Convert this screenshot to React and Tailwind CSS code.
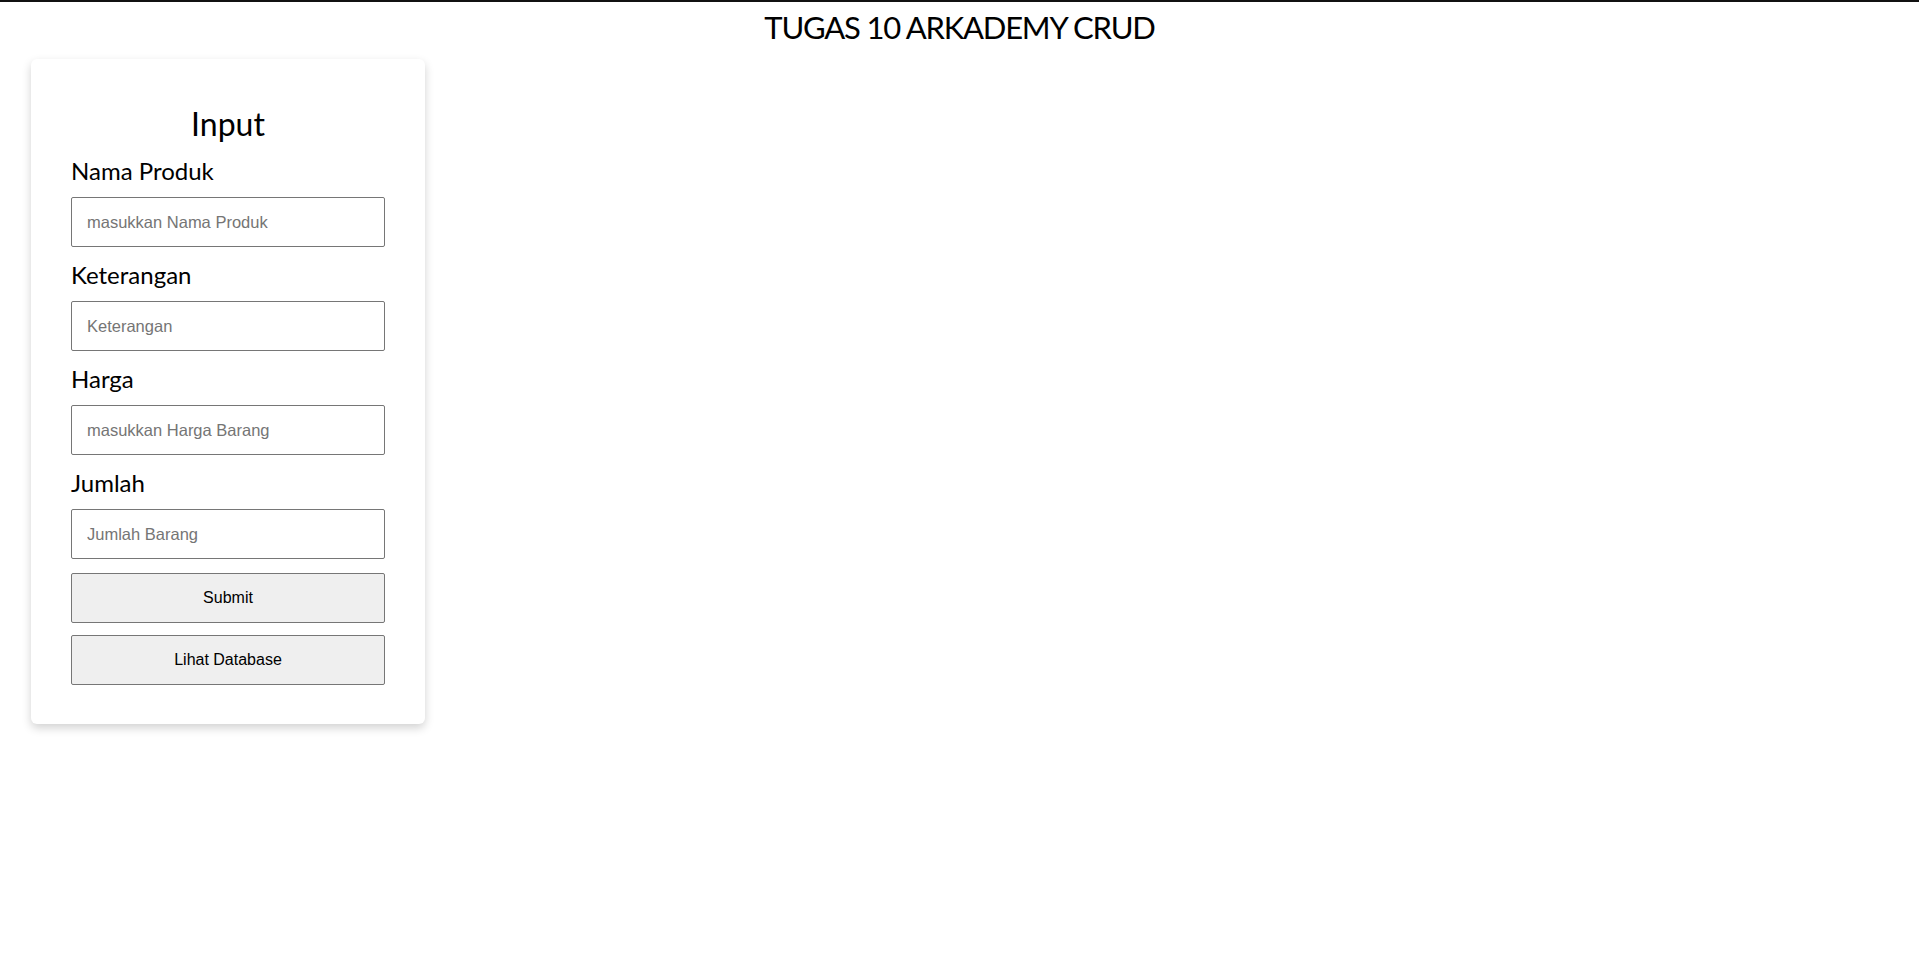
import React from 'react';

const fields = [
  { label: 'Nama Produk', placeholder: 'masukkan Nama Produk' },
  { label: 'Keterangan', placeholder: 'Keterangan' },
  { label: 'Harga', placeholder: 'masukkan Harga Barang' },
  { label: 'Jumlah', placeholder: 'Jumlah Barang' },
];

const App = () => {
  return (
    <div className="min-h-screen bg-white border-t-2 border-[#111] font-['Lato',sans-serif] text-black">
      <h1 className="pt-[5px] text-center text-[31px] leading-[40px] font-normal tracking-[-1.2px]">TUGAS 10 ARKADEMY CRUD</h1>

      <div className="ml-[31px] mt-[12px] w-[394px] rounded-md bg-white px-[40px] pt-[45px] pb-[39px] shadow-[0_4px_10px_0_rgba(0,0,0,0.18)]">
        <h2 className="text-center text-[32px] leading-[40px]">Input</h2>

        <form className="mt-[13px] flex flex-col" onSubmit={e => e.preventDefault()}>
          {fields.map((f, i) => (
            <div key={f.label} className={i > 0 ? 'mt-[14px]' : ''}>
              <label className="block text-[24px] leading-[28px]">{f.label}</label>
              <input
                type="text"
                placeholder={f.placeholder}
                className="mt-[12px] block h-[50px] w-full rounded-[2px] border border-[#767676] px-[15px] font-['Liberation_Sans',Arial,sans-serif] text-[16.5px] placeholder:text-[#757575] outline-none"
              />
            </div>
          ))}

          <button
            type="submit"
            className="mt-[14px] h-[50px] w-full rounded-[2px] border border-[#767676] bg-[#efefef] font-['Liberation_Sans',Arial,sans-serif] text-[16px] text-black"
          >
            Submit
          </button>
          <button
            type="button"
            className="mt-[12px] h-[50px] w-full rounded-[2px] border border-[#767676] bg-[#efefef] font-['Liberation_Sans',Arial,sans-serif] text-[16px] text-black"
          >
            Lihat Database
          </button>
        </form>
      </div>
    </div>
  );
};

export default App;
